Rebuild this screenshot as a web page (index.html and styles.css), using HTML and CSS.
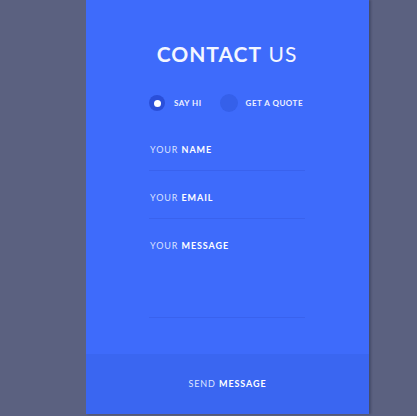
FILE: index.html
```html
<!DOCTYPE html>
<html>
<head>
<meta charset="utf-8">
<link rel="stylesheet" href="styles.css">
</head>
<body>
<div class="page">
  <div class="card">
    <div class="content">
      <h1 class="title"><span class="strong">CONTACT</span> US</h1>
      <div class="choices">
        <div class="choice">
          <span class="radio radio-on"><span class="dot"></span></span>
          <span class="choice-label">SAY HI</span>
        </div>
        <div class="choice">
          <span class="radio radio-off"></span>
          <span class="choice-label">GET A QUOTE</span>
        </div>
      </div>
      <div class="field field-name">
        <div class="label">YOUR <b>NAME</b></div>
      </div>
      <div class="field field-email">
        <div class="label">YOUR <b>EMAIL</b></div>
      </div>
      <div class="field field-message">
        <div class="label">YOUR <b>MESSAGE</b></div>
      </div>
    </div>
    <div class="send"><span class="send-text">SEND <b>MESSAGE</b></span></div>
  </div>
</div>
</body>
</html>
```
FILE: styles.css
```css
html, body {
  margin: 0;
  padding: 0;
}
body {
  background: #5b6180;
  font-family: Lato, "Open Sans", sans-serif;
  color: #ffffff;
}
.page {
  display: flex;
  height: 416px;
  padding-left: 86px;
}
.card {
  width: 283px;
  height: 414px;
  background: #3e6bfb;
  display: flex;
  flex-direction: column;
  box-shadow: 2px 0 2px rgba(30, 34, 60, 0.35);
}
.content {
  flex: 1;
  padding: 42px 64px 0 63px;
}
.title {
  margin: 0;
  text-align: center;
  font-size: 21px;
  line-height: 24px;
  font-weight: 400;
  letter-spacing: 1px;
  color: #f4f6ff;
  white-space: nowrap;
}
.title .strong {
  font-weight: 700;
}
.choices {
  display: flex;
  align-items: center;
  margin-top: 28px;
  height: 18px;
  white-space: nowrap;
}
.choice {
  display: flex;
  align-items: center;
}
.choice + .choice {
  margin-left: 18px;
}
.radio {
  flex: none;
  width: 16px;
  height: 16px;
  border-radius: 50%;
  display: flex;
  align-items: center;
  justify-content: center;
}
.radio-on {
  background: #2a4fd9;
}
.radio-off {
  width: 18px;
  height: 18px;
  background: #3560ea;
}
.dot {
  width: 7px;
  height: 7px;
  border-radius: 50%;
  background: #ffffff;
}
.choice-label {
  font-size: 8px;
  font-weight: 700;
  letter-spacing: 0.5px;
  margin-left: 9px;
  color: #eef1ff;
}
.choice:last-child .choice-label {
  margin-left: 8px;
}
.field {
  border-bottom: 1px solid #3962ee;
  white-space: nowrap;
}
.field-name {
  margin-top: 33px;
  height: 25px;
}
.field-email {
  height: 47px;
}
.field-message {
  height: 98px;
}
.label {
  font-size: 9px;
  letter-spacing: 0.9px;
  line-height: 10px;
  padding-left: 1px;
  color: #d9e0ff;
}
.field-email .label,
.field-message .label {
  padding-top: 22px;
}
.label b {
  font-weight: 700;
  color: #ffffff;
}
.send {
  height: 59px;
  background: #3a66f1;
  display: flex;
  align-items: center;
  justify-content: center;
  padding-bottom: 1px;
}
.send-text {
  font-size: 9px;
  letter-spacing: 0.9px;
  color: #dfe5ff;
  white-space: nowrap;
}
.send b {
  color: #ffffff;
  font-weight: 700;
}
```
